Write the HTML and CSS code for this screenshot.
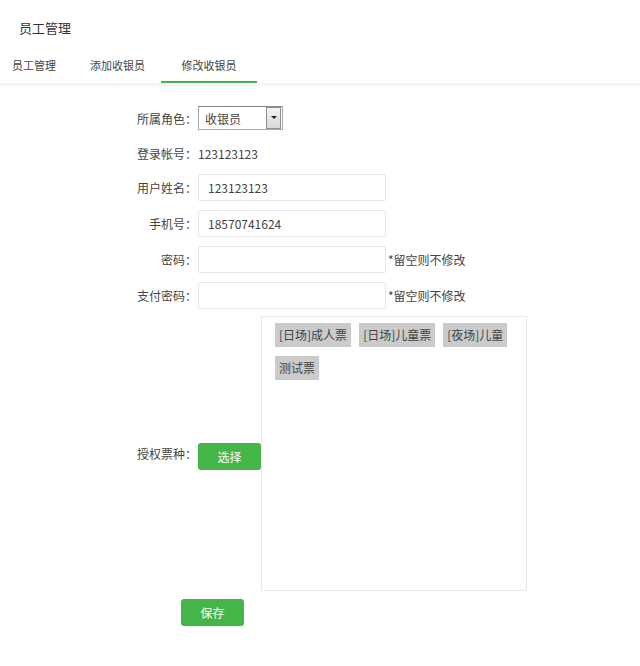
FILE: index.html
```html
<!DOCTYPE html>
<html lang="zh-CN">
<head>
  <meta charset="UTF-8">
  <title>员工管理</title>
  <link rel="stylesheet" href="styles.css">
</head>
<body>
  <div class="page-title">员工管理</div>

  <div class="tabs">
    <a href="#" class="tab tab-first">员工管理</a>
    <a href="#" class="tab tab-second">添加收银员</a>
    <a href="#" class="tab tab-active">修改收银员</a>
  </div>

  <form class="cashier-form">
    <div class="form-row row-select">
      <label class="form-label">所属角色：</label>
      <div class="fake-select">
        <span class="select-text">收银员</span>
        <span class="select-arrow"></span>
      </div>
    </div>

    <div class="form-row row-text">
      <label class="form-label">登录帐号：</label>
      <span class="plain-value">123123123</span>
    </div>

    <div class="form-row">
      <label class="form-label">用户姓名：</label>
      <input class="text-input" type="text" value="123123123">
    </div>

    <div class="form-row">
      <label class="form-label">手机号：</label>
      <input class="text-input" type="text" value="18570741624">
    </div>

    <div class="form-row">
      <label class="form-label">密码：</label>
      <input class="text-input" type="password">
      <span class="hint">*留空则不修改</span>
    </div>

    <div class="form-row">
      <label class="form-label">支付密码：</label>
      <input class="text-input" type="password">
      <span class="hint">*留空则不修改</span>
    </div>

    <div class="form-row row-tickets">
      <label class="form-label">授权票种：</label>
      <button type="button" class="btn-green btn-choose">选择</button>
      <div class="ticket-box">
        <span class="ticket-tag">[日场]成人票</span>
        <span class="ticket-tag">[日场]儿童票</span>
        <span class="ticket-tag">[夜场]儿童</span>
        <span class="ticket-tag">测试票</span>
      </div>
    </div>

    <div class="form-actions">
      <button type="button" class="btn-green btn-save">保存</button>
    </div>
  </form>
</body>
</html>
```

FILE: styles.css
```css
body {
  margin: 0;
  background-color: #fff;
  font-family: "Noto Sans CJK SC", "Noto Sans", sans-serif;
  font-size: 12px;
  color: #444;
}

.page-title {
  height: 50px;
  padding-left: 19px;
  line-height: 56px;
  font-size: 13px;
  color: #333;
}

.tabs {
  display: flex;
  height: 33px;
  border-bottom: 3px solid #f4f4f6;
}

.tab {
  display: block;
  line-height: 30px;
  font-size: 11px;
  color: #444;
  text-decoration: none;
}

.tab-first {
  margin-left: 12px;
}

.tab-second {
  margin-left: 34px;
}

.tab-active {
  margin-left: 16px;
  width: 96px;
  text-align: center;
  border-bottom: 2px solid #44b549;
}

.cashier-form {
  padding-top: 18px;
}

.form-row {
  display: flex;
  align-items: center;
  height: 27px;
  margin-bottom: 9px;
}

.row-select {
  height: 28px;
}

.row-text {
  height: 24px;
  margin-bottom: 9px;
}

.form-label {
  width: 198px;
  padding-right: 1px;
  box-sizing: border-box;
  text-align: right;
  color: #444;
}

.plain-value {
  font-size: 12px;
  color: #444;
}

.fake-select {
  display: flex;
  align-items: center;
  width: 85px;
  height: 24px;
  box-sizing: border-box;
  border: 1px solid #a9a9a9;
  border-top-color: #8a8a8a;
  background-color: #fff;
}

.select-text {
  flex: 1;
  padding-left: 6px;
}

/* old-style dropdown button on the right of the select */
.select-arrow {
  position: relative;
  width: 13px;
  height: 20px;
  margin-right: 1px;
  border: 1px solid #8f8f8f;
  background: linear-gradient(to bottom, #f4f4f4, #d9d9d9);
}

.select-arrow:after {
  content: "";
  position: absolute;
  left: 4px;
  top: 8px;
  border-left: 3px solid transparent;
  border-right: 3px solid transparent;
  border-top: 3px solid #222;
}

.text-input {
  width: 188px;
  height: 27px;
  box-sizing: border-box;
  margin: 0;
  padding: 0 9px;
  border: 1px solid #e6e6e6;
  border-radius: 2px;
  font-family: inherit;
  font-size: 12px;
  color: #444;
  outline: none;
}

.hint {
  margin-left: 2px;
  color: #444;
}

.row-tickets {
  height: auto;
  margin-top: -2px;
  margin-bottom: 8px;
}

.btn-green {
  border: none;
  border-radius: 3px;
  background-color: #44b549;
  color: #fff;
  font-family: inherit;
  font-size: 12px;
  cursor: pointer;
}

.btn-choose {
  width: 63px;
  height: 27px;
  margin-top: 6px;
}

.ticket-box {
  display: flex;
  flex-wrap: wrap;
  align-content: flex-start;
  gap: 9px 8px;
  width: 266px;
  height: 275px;
  box-sizing: border-box;
  padding: 6px 13px;
  border: 1px solid #e8e8e8;
}

.ticket-tag {
  display: inline-block;
  height: 24px;
  padding: 0 4px;
  line-height: 24px;
  background-color: #cbcbcb;
  color: #444;
  white-space: nowrap;
}

.form-actions {
  padding-left: 181px;
}

.btn-save {
  width: 63px;
  height: 27px;
}
```
